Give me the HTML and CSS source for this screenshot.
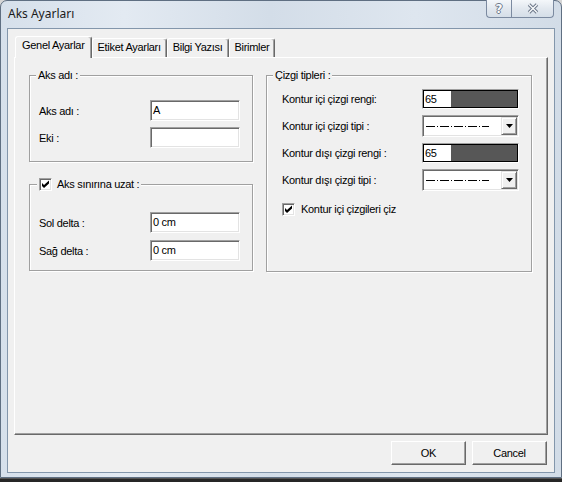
FILE: index.html
```html
<!DOCTYPE html>
<html lang="tr">
<head>
<meta charset="utf-8">
<title>Aks Ayarları</title>
<link rel="stylesheet" href="styles.css">
</head>
<body>
<div class="window">
  <div class="titlebar">
    <span class="title">Aks Ayarları</span>
    <div class="caption">
      <div class="cbtn help"><span class="q">?</span></div>
      <div class="cbtn close">
        <svg width="12" height="11" viewBox="0 0 12 11">
          <path d="M2 1.5 L10 9.5 M10 1.5 L2 9.5" stroke="#6c7889" stroke-width="3.4" fill="none"/>
          <path d="M2 1.5 L10 9.5 M10 1.5 L2 9.5" stroke="#fbfcfd" stroke-width="1.4" fill="none"/>
        </svg>
      </div>
    </div>
  </div>
  <div class="client">
    <div class="tabstrip">
      <div class="tab selected">Genel Ayarlar</div>
      <div class="tab">Etiket Ayarları</div>
      <div class="tab">Bilgi Yazısı</div>
      <div class="tab">Birimler</div>
    </div>
    <div class="panel">
      <div class="col col-left">
        <fieldset class="group g-name">
          <legend class="lg-name">Aks adı :</legend>
          <div class="row"><span>Aks adı :</span><div class="field">A</div></div>
          <div class="row"><span>Eki :</span><div class="field"></div></div>
        </fieldset>
        <fieldset class="group g-extend">
          <legend class="lg-extend"><span class="chk"><svg width="11" height="11" viewBox="0 0 11 11"><polygon points="2,4 4,6 9,1.5 9,4.5 4,9 2,7" fill="#000"/></svg></span><span>Aks sınırına uzat :</span></legend>
          <div class="row"><span>Sol delta :</span><div class="field">0 cm</div></div>
          <div class="row"><span>Sağ delta :</span><div class="field">0 cm</div></div>
        </fieldset>
      </div>
      <div class="col col-right">
        <fieldset class="group g-lines">
          <legend class="lg-lines">Çizgi tipleri :</legend>
          <div class="row"><span>Kontur içi çizgi rengi:</span>
            <div class="colorbox"><div class="colorinner"><span class="colortext">65</span><span class="swatch"></span></div></div>
          </div>
          <div class="row"><span>Kontur içi çizgi tipi :</span>
            <div class="combo">
              <div class="dash"><svg width="64" height="3" viewBox="0 0 64 3"><line x1="0" y1="1.5" x2="63" y2="1.5" stroke="#000" stroke-width="1" stroke-dasharray="9 2 1 2"/></svg></div>
              <div class="ddbtn"><svg width="7" height="4" viewBox="0 0 7 4"><polygon points="0,0 7,0 3.5,4" fill="#000"/></svg></div>
            </div>
          </div>
          <div class="row"><span>Kontur dışı çizgi rengi :</span>
            <div class="colorbox"><div class="colorinner"><span class="colortext">65</span><span class="swatch"></span></div></div>
          </div>
          <div class="row"><span>Kontur dışı çizgi tipi :</span>
            <div class="combo">
              <div class="dash"><svg width="64" height="3" viewBox="0 0 64 3"><line x1="0" y1="1.5" x2="63" y2="1.5" stroke="#000" stroke-width="1" stroke-dasharray="9 2 1 2"/></svg></div>
              <div class="ddbtn"><svg width="7" height="4" viewBox="0 0 7 4"><polygon points="0,0 7,0 3.5,4" fill="#000"/></svg></div>
            </div>
          </div>
          <div class="checkrow"><span class="chk"><svg width="11" height="11" viewBox="0 0 11 11"><polygon points="2,4 4,6 9,1.5 9,4.5 4,9 2,7" fill="#000"/></svg></span><span>Kontur içi çizgileri çiz</span></div>
        </fieldset>
      </div>
    </div>
    <div class="buttons">
      <div class="btn">OK</div>
      <div class="btn">Cancel</div>
    </div>
  </div>
</div>
<div class="taskstrip"></div>
</body>
</html>
```

FILE: styles.css
```css
* { box-sizing: border-box; }
html, body { margin: 0; padding: 0; }
body {
  width: 562px;
  height: 482px;
  overflow: hidden;
  background: #d6d6d6;
  font-family: "Liberation Sans", Arial, sans-serif;
  font-size: 11px;
  letter-spacing: -0.3px;
  color: #000;
}

.window {
  width: 562px;
  height: 478px;
  border: 1px solid #5f6f82;
  border-radius: 7px 7px 0 0;
  padding: 0 6px 4px;
  background: linear-gradient(90deg, #d6e0eb 0%, #e3eaf2 22%, #d3dde8 48%, #dee6ef 74%, #d2dce7 100%);
  display: flex;
  flex-direction: column;
}

.titlebar {
  height: 27px;
  display: flex;
  justify-content: space-between;
  align-items: flex-start;
}
.title {
  font-family: "Noto Sans", "Open Sans", sans-serif;
  font-size: 12px;
  letter-spacing: 0;
  line-height: 26px;
  padding-left: 1px;
  color: #1b1b1b;
}
.caption {
  display: flex;
  margin-top: -1px;
  margin-right: 1px;
}
.cbtn {
  height: 18px;
  border: 1px solid #7b8aa0;
  border-top: none;
  background: linear-gradient(#f4f7fa, #e2e8ef 50%, #d5dee8);
  display: flex;
  align-items: center;
  justify-content: center;
}
.help {
  width: 25px;
  border-right: none;
  border-radius: 0 0 0 4px;
}
.close {
  width: 43px;
  border-radius: 0 0 4px 0;
}
.q {
  font-family: "DejaVu Sans", sans-serif;
  font-weight: bold;
  font-size: 12px;
  line-height: 14px;
  letter-spacing: 0;
  color: #fbfcfd;
  text-shadow: -1px 0 #6c7889, 1px 0 #6c7889, 0 -1px #6c7889, 0 1px #6c7889;
}

.client {
  height: 445px;
  border: 1px solid #8396ab;
  background: #f0f0f0;
  padding: 7px 6px 7px;
  display: flex;
  flex-direction: column;
}

.tabstrip {
  height: 21px;
  display: flex;
  align-items: flex-end;
  padding-left: 1px;
  position: relative;
  z-index: 1;
}
.tab {
  height: 19px;
  padding: 0 5px;
  border: 1px solid;
  border-color: #fff #696969 transparent #fff;
  border-bottom: none;
  border-radius: 3px 3px 0 0;
  box-shadow: inset -1px 0 #a0a0a0;
  background: #f0f0f0;
  line-height: 17px;
  white-space: nowrap;
}
.tab.selected {
  height: 22px;
  margin-bottom: -1px;
  padding: 0 6px;
  line-height: 17px;
}

.panel {
  height: 378px;
  border: 1px solid;
  border-color: #fff #696969 #696969 #fff;
  box-shadow: inset -1px -1px #a0a0a0;
  padding: 11px 0 0 14px;
  display: flex;
  gap: 13px;
  align-items: flex-start;
}
.col { display: flex; flex-direction: column; }
.col-left { width: 224px; }
.col-right { width: 266px; }

.group {
  margin: 0;
  min-width: 0;
  border: 1px solid #a0a0a0;
  box-shadow: inset 1px 1px #fff, 1px 1px #fff;
}
.group legend {
  padding: 0 2px;
  line-height: 13px;
  background: #f0f0f0;
}
.g-name { padding: 18px 12px 13px 9px; }
.lg-name { margin-left: -3px; }
.g-extend { padding: 21px 12px 9px 9px; margin-top: 16px; }
.lg-extend { margin-left: -2px; display: flex; align-items: center; gap: 5px; }
.g-lines { padding: 7px 12px 55px 15px; }
.lg-lines { margin-left: -9px; }

.row {
  display: flex;
  justify-content: space-between;
  align-items: center;
}
.g-name .row + .row { margin-top: 6px; }
.g-extend .row + .row { margin-top: 7px; }
.g-lines .row + .row { margin-top: 6px; }

.field {
  width: 90px;
  height: 21px;
  border: 1px solid;
  border-color: #a0a0a0 #fff #fff #a0a0a0;
  box-shadow: inset 1px 1px #696969, inset -1px -1px #e3e3e3;
  background: #fff;
  padding: 0 0 0 2px;
  line-height: 18px;
}

.colorbox {
  width: 97px;
  height: 20px;
  border: 1px solid;
  border-color: #a0a0a0 #fff #fff #a0a0a0;
  display: flex;
}
.colorinner {
  flex: 1;
  border: 1px solid #000;
  display: flex;
}
.colortext {
  width: 27px;
  background: #fff;
  padding-left: 1px;
  line-height: 16px;
}
.swatch {
  flex: 1;
  background: #575757;
}

.combo {
  width: 97px;
  height: 22px;
  border: 1px solid;
  border-color: #a0a0a0 #fff #fff #a0a0a0;
  box-shadow: inset 1px 1px #696969, inset -1px -1px #e3e3e3;
  background: #fff;
  padding: 2px 1px 2px 2px;
  display: flex;
  align-items: center;
}
.dash {
  flex: 1;
  display: flex;
  align-items: center;
  padding-left: 1px;
}
.dash svg { display: block; }
.ddbtn {
  width: 16px;
  height: 18px;
  border: 1px solid;
  border-color: #e3e3e3 #696969 #696969 #e3e3e3;
  box-shadow: inset 1px 1px #fff, inset -1px -1px #a0a0a0;
  background: #f0f0f0;
  display: flex;
  align-items: center;
  justify-content: center;
}
.ddbtn svg { display: block; }

.chk {
  width: 13px;
  height: 13px;
  flex: none;
  border: 1px solid;
  border-color: #a0a0a0 #fff #fff #a0a0a0;
  box-shadow: inset 1px 1px #696969, inset -1px -1px #e3e3e3;
  background: #fff;
  display: inline-flex;
}
.chk svg { display: block; }
.checkrow {
  display: flex;
  align-items: center;
  gap: 6px;
  margin-top: 12px;
  line-height: 13px;
}

.buttons {
  display: flex;
  justify-content: flex-end;
  gap: 6px;
  margin-top: 6px;
  padding-right: 1px;
}
.btn {
  width: 75px;
  height: 24px;
  border: 1px solid;
  border-color: #fff #696969 #696969 #fff;
  box-shadow: inset -1px -1px #a0a0a0;
  background: #f0f0f0;
  display: flex;
  align-items: center;
  justify-content: center;
}

.taskstrip {
  height: 4px;
  background: #262626;
  border-top: 1px solid #555;
}
```
